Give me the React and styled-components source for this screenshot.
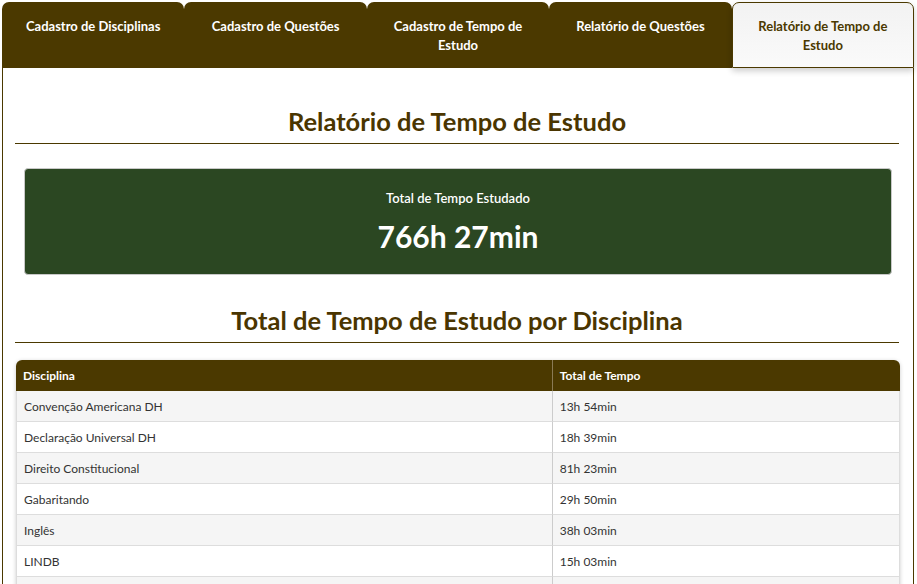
import React, { useState } from 'react';
import styled, { createGlobalStyle } from 'styled-components';

const GlobalStyle = createGlobalStyle`
  * { box-sizing: border-box; }
  body {
    margin: 0;
    background: #ffffff;
    font-family: "Segoe UI", "Lato", "Noto Sans", sans-serif;
  }
`;

const BROWN = '#4b3900';

const Page = styled.div`
  padding: 2px 3px 0 2px;
`;

const TabBar = styled.div`
  display: flex;
`;

const Tab = styled.button`
  flex: 1;
  height: 66px;
  padding: 14px 16px 0;
  border: 1px solid ${props => (props.active ? BROWN : 'transparent')};
  border-radius: 7px 7px 0 0;
  background: ${props => (props.active ? 'linear-gradient(180deg, #f2f2f2 0%, #fafafa 100%)' : BROWN)};
  color: ${props => (props.active ? BROWN : '#ffffff')};
  font-family: inherit;
  font-size: 13px;
  font-weight: 700;
  line-height: 19px;
  text-align: center;
  display: flex;
  justify-content: center;
  align-items: flex-start;
  cursor: pointer;
  box-shadow: ${props => (props.active ? '0 3px 6px rgba(0, 0, 0, 0.2)' : 'none')};
  position: relative;
  z-index: ${props => (props.active ? 1 : 0)};
`;

const Panel = styled.div`
  display: flow-root;
  border: 1px solid ${BROWN};
  border-top: none;
  padding: 0 14px 0 12px;
  min-height: 520px;
`;

const Heading = styled.h2`
  margin: ${props => props.top}px 0 0;
  padding-bottom: 7px;
  border-bottom: 1px solid ${BROWN};
  color: #4a3500;
  font-size: 25.5px;
  font-weight: 700;
  line-height: 30px;
  text-align: center;
`;

const TotalCard = styled.div`
  margin: 24px 7px 0 9px;
  padding: 19px 20px 18px;
  background: #2b4722;
  border: 1px solid #c8c8c8;
  border-radius: 4px;
  color: #ffffff;
  text-align: center;
`;

const TotalLabel = styled.div`
  font-size: 13px;
  font-weight: 600;
  line-height: 20px;
`;

const TotalValue = styled.div`
  margin-top: 8px;
  font-size: 30px;
  font-weight: 700;
  line-height: 40px;
`;

const Table = styled.table`
  width: 100%;
  margin: 17px 0 0 1px;
  border-collapse: separate;
  border-spacing: 0;
  border-radius: 6px 6px 0 0;
  overflow: hidden;
  box-shadow: 0 1px 4px rgba(0, 0, 0, 0.2);
  font-size: 12px;
`;

const HeadCell = styled.th`
  height: 31px;
  padding: 0 7px;
  background: ${BROWN};
  color: #ffffff;
  font-weight: 700;
  text-align: left;
  border-left: ${props => (props.first ? 'none' : '1px solid #8a7a55')};
  width: ${props => props.width || 'auto'};
`;

const Row = styled.tr`
  background: ${props => (props.odd ? '#f5f5f5' : '#ffffff')};
`;

const Cell = styled.td`
  height: 31px;
  padding: 0 7px;
  color: #333333;
  border-bottom: 1px solid #dddddd;
  border-left: ${props => (props.first ? '1px solid #dddddd' : '1px solid #cccccc')};
  border-right: ${props => (props.last ? '1px solid #dddddd' : 'none')};
`;

const tabs = [
  'Cadastro de Disciplinas',
  'Cadastro de Questões',
  'Cadastro de Tempo de Estudo',
  'Relatório de Questões',
  'Relatório de Tempo de Estudo',
];

const rows = [
  ['Convenção Americana DH', '13h 54min'],
  ['Declaração Universal DH', '18h 39min'],
  ['Direito Constitucional', '81h 23min'],
  ['Gabaritando', '29h 50min'],
  ['Inglês', '38h 03min'],
  ['LINDB', '15h 03min'],
  ['Língua Portuguesa', '92h 41min'],
  ['Raciocínio Lógico', '47h 12min'],
];

const App = () => {
  const [active, setActive] = useState(4);

  return (
    <>
      <GlobalStyle />
      <Page>
        <TabBar>
          {tabs.map((t, i) => (
            <Tab key={t} active={i === active ? 1 : 0} onClick={() => setActive(i)}>
              {t}
            </Tab>
          ))}
        </TabBar>
        <Panel>
          <Heading top={38}>Relatório de Tempo de Estudo</Heading>
          <TotalCard>
            <TotalLabel>Total de Tempo Estudado</TotalLabel>
            <TotalValue>766h 27min</TotalValue>
          </TotalCard>
          <Heading top={30}>Total de Tempo de Estudo por Disciplina</Heading>
          <Table>
            <thead>
              <tr>
                <HeadCell first width="60.6%">Disciplina</HeadCell>
                <HeadCell>Total de Tempo</HeadCell>
              </tr>
            </thead>
            <tbody>
              {rows.map(([name, time], i) => (
                <Row key={name} odd={i % 2 === 0 ? 1 : 0}>
                  <Cell first>{name}</Cell>
                  <Cell last>{time}</Cell>
                </Row>
              ))}
            </tbody>
          </Table>
        </Panel>
      </Page>
    </>
  );
};

export default App;
